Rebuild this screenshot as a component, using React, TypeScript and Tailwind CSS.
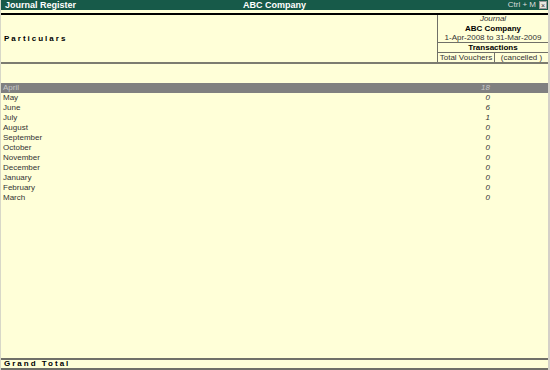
import React from "react";

const rows: [string, string][] = [
  ["April", "18"],
  ["May", "0"],
  ["June", "6"],
  ["July", "1"],
  ["August", "0"],
  ["September", "0"],
  ["October", "0"],
  ["November", "0"],
  ["December", "0"],
  ["January", "0"],
  ["February", "0"],
  ["March", "0"],
];

export default function App() {
  return (
    <div
      className="w-[550px] h-[370px] bg-[#ffffd8] flex flex-col border-l border-r-2 border-l-[#d8d8c8] border-r-[#d4d0c8] text-[8px] text-[#333]"
      style={{ fontFamily: '"Liberation Sans", Arial, sans-serif' }}
    >
      {/* title bar */}
      <div className="h-[10px] bg-[#175a49] text-white text-[9px] font-bold leading-[10px] grid grid-cols-[1fr_auto_1fr] items-center">
        <div className="pl-[4px]">Journal Register</div>
        <div>ABC Company</div>
        <div className="flex justify-end items-center gap-[3px] pr-[1px]">
          <span className="font-normal text-[8px] text-[#dddddd]">Ctrl + M</span>
          <span className="w-[8px] h-[8px] bg-[#e8e8e0] border border-[#999] text-[#333] flex items-center justify-center text-[7px] leading-none font-normal">
            ×
          </span>
        </div>
      </div>
      <div className="h-[3px]" />
      <div className="h-[2px] bg-black" />

      {/* header */}
      <div className="h-[49px] flex border-b-2 border-[#7c7c70]">
        <div className="flex-1 flex items-center pl-[3px] font-bold text-black tracking-[2px]">
          Particulars
        </div>
        <div className="w-[111px] border-l border-[#707068] flex flex-col text-center">
          <div className="h-[28px] flex flex-col justify-center leading-[9.5px] border-b border-[#707068]">
            <div className="italic">Journal</div>
            <div className="font-bold text-black">ABC Company</div>
            <div>1-Apr-2008 to 31-Mar-2009</div>
          </div>
          <div className="h-[10px] leading-[10px] font-bold text-black border-b border-[#707068]">
            Transactions
          </div>
          <div className="flex-1 flex leading-[9px]">
            <div className="w-[57px] border-r border-[#707068]">Total Vouchers</div>
            <div className="flex-1">(cancelled )</div>
          </div>
        </div>
      </div>

      <div className="h-[19px]" />

      {/* months */}
      <div className="flex flex-col">
        {rows.map(([m, v], i) => (
          <div
            key={m}
            className={[
              "h-[10px] leading-[10px] flex",
              i === 0 ? "bg-[#808080] text-[#c8c8c8]" : "",
            ].join(" ")}
          >
            <div className="flex-1 pl-[2px]">{m}</div>
            <div className="w-[111px] flex">
              <div className="w-[56px] text-right pr-[3px] italic">{v}</div>
            </div>
          </div>
        ))}
      </div>

      <div className="flex-1" />

      {/* grand total */}
      <div className="h-[12px] border-t-2 border-b-2 border-[#707068] flex items-center pl-[3px] font-bold text-black tracking-[2px]">
        Grand Total
      </div>
    </div>
  );
}
